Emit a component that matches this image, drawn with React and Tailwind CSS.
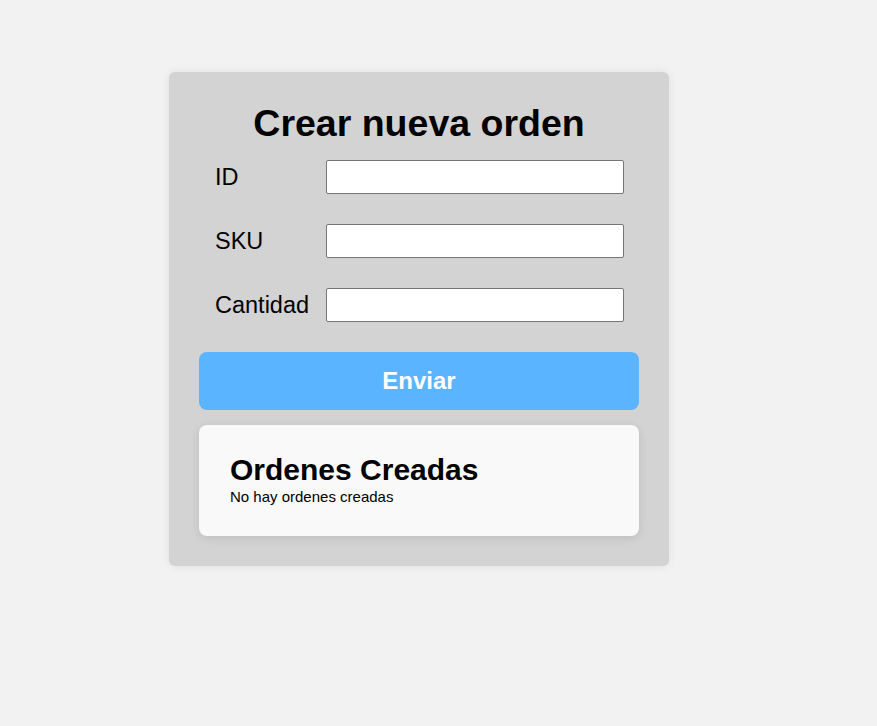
export default function App() {
  const rows = ["ID", "SKU", "Cantidad"];
  return (
    <div className="min-h-[726px] bg-[#f2f2f2] pl-[169px] pt-[72px] font-['Liberation_Sans',Arial,sans-serif] text-black">
      <div className="w-[500px] rounded-[6px] bg-[#d3d3d3] p-[30px] shadow-[0_0_10px_rgba(0,0,0,0.08)]">
        <h1 className="pt-[1px] text-center text-[37.5px] font-bold leading-[40px]">Crear nueva orden</h1>
        <div className="mt-[17px] flex flex-col gap-[30px]">
          {rows.map((r) => (
            <div key={r} className="flex items-center pl-[16px]">
              <label className="w-[111px] shrink-0 text-[23.5px] leading-[28px]">{r}</label>
              <input
                type="text"
                className="h-[34px] w-[298px] rounded-[2px] border border-[#767676] bg-white"
              />
            </div>
          ))}
        </div>
        <button className="mt-[30px] flex h-[58px] w-full items-center justify-center rounded-[8px] bg-[#5ab4ff] text-[24px] font-bold text-white">
          Enviar
        </button>
        <div className="mt-[15px] rounded-[8px] bg-[#f9f9f9] px-[31px] pb-[31px] pt-[28px] shadow-[0_2px_10px_rgba(0,0,0,0.1)]">
          <h2 className="text-[30px] font-bold leading-[34px]">Ordenes Creadas</h2>
          <p className="mt-[1px] text-[15px] leading-[17px]">No hay ordenes creadas</p>
        </div>
      </div>
    </div>
  );
}
